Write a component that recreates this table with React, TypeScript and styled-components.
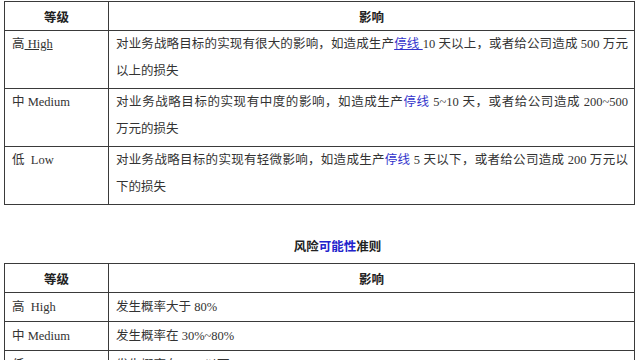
import React from "react";
import styled, { createGlobalStyle } from "styled-components";

const Global = createGlobalStyle`
  html, body { margin: 0; padding: 0; background: #ffffff; }
  body { width: 640px; height: 360px; overflow: hidden; }
`;

const Page = styled.div`
  padding: 1px 5px 0 4px;
  font-family: "Liberation Serif", "Noto Sans CJK SC", serif;
  font-size: 12.5px;
  color: #333333;
`;

const Table = styled.table`
  width: 631px;
  border-collapse: collapse;
  table-layout: fixed;
`;

const HeadCell = styled.th<{ $w?: number }>`
  width: ${(p) => (p.$w ? `${p.$w}px` : "auto")};
  border: 1px solid #3a3a3a;
  height: 28px;
  padding: 0;
  font-weight: bold;
  font-family: "Noto Sans CJK SC", sans-serif;
  font-size: 12.5px;
  color: #222;
  text-align: center;
  vertical-align: middle;
`;

const Cell = styled.td<{ $compact?: boolean }>`
  border: 1px solid #3a3a3a;
  padding: ${(p) => (p.$compact ? "0 6px 0 7px" : "0 6px 3px 7px")};
  height: ${(p) => (p.$compact ? "28px" : "auto")};
  line-height: 27px;
  vertical-align: ${(p) => (p.$compact ? "middle" : "top")};
`;

const Line = styled.div<{ $justify?: boolean }>`
  white-space: nowrap;
  text-align: ${(p) => (p.$justify ? "justify" : "left")};
  text-align-last: ${(p) => (p.$justify ? "justify" : "auto")};
  ${(p) => (p.$justify ? "white-space: normal;" : "")}
`;

const Link = styled.span<{ $under?: boolean }>`
  color: #3333cc;
  text-decoration: ${(p) => (p.$under ? "underline" : "none")};
`;

const Under = styled.span`
  text-decoration: underline;
`;

const Title = styled.div`
  margin: 31px 0 7px 18px;
  width: 631px;
  text-align: center;
  line-height: 20px;
  font-family: "Noto Sans CJK SC", sans-serif;
  font-size: 12.5px;
  font-weight: bold;
  color: #222;
`;

const Blue = styled.span`
  color: #2222cc;
`;

export default function App() {
  return (
    <Page>
      <Global />
      <Table>
        <thead>
          <tr>
            <HeadCell $w={103}>等级</HeadCell>
            <HeadCell>影响</HeadCell>
          </tr>
        </thead>
        <tbody>
          <tr>
            <Cell>
              高<Under>&nbsp;High</Under>
            </Cell>
            <Cell>
              <Line $justify>
                对业务战略目标的实现有很大的影响，如造成生产<Link $under>停线&nbsp;</Link>10 天以上，或者给公司造成 500 万元
              </Line>
              <Line>以上的损失</Line>
            </Cell>
          </tr>
          <tr>
            <Cell>中 Medium</Cell>
            <Cell>
              <Line $justify>
                对业务战略目标的实现有中度的影响，如造成生产<Link>停线</Link> 5~10 天，或者给公司造成 200~500
              </Line>
              <Line>万元的损失</Line>
            </Cell>
          </tr>
          <tr>
            <Cell>低&nbsp;&nbsp;Low</Cell>
            <Cell>
              <Line $justify>
                对业务战略目标的实现有轻微影响，如造成生产<Link>停线</Link> 5 天以下，或者给公司造成 200 万元以
              </Line>
              <Line>下的损失</Line>
            </Cell>
          </tr>
        </tbody>
      </Table>

      <Title>
        风险<Blue>可能性</Blue>准则
      </Title>

      <Table>
        <thead>
          <tr>
            <HeadCell $w={103}>等级</HeadCell>
            <HeadCell>影响</HeadCell>
          </tr>
        </thead>
        <tbody>
          <tr>
            <Cell $compact>高&nbsp;&nbsp;High</Cell>
            <Cell $compact>发生概率大于 80%</Cell>
          </tr>
          <tr>
            <Cell $compact>中 Medium</Cell>
            <Cell $compact>发生概率在 30%~80%</Cell>
          </tr>
          <tr>
            <Cell $compact>低&nbsp;&nbsp;Low</Cell>
            <Cell $compact>发生概率在 30%以下</Cell>
          </tr>
        </tbody>
      </Table>
    </Page>
  );
}
